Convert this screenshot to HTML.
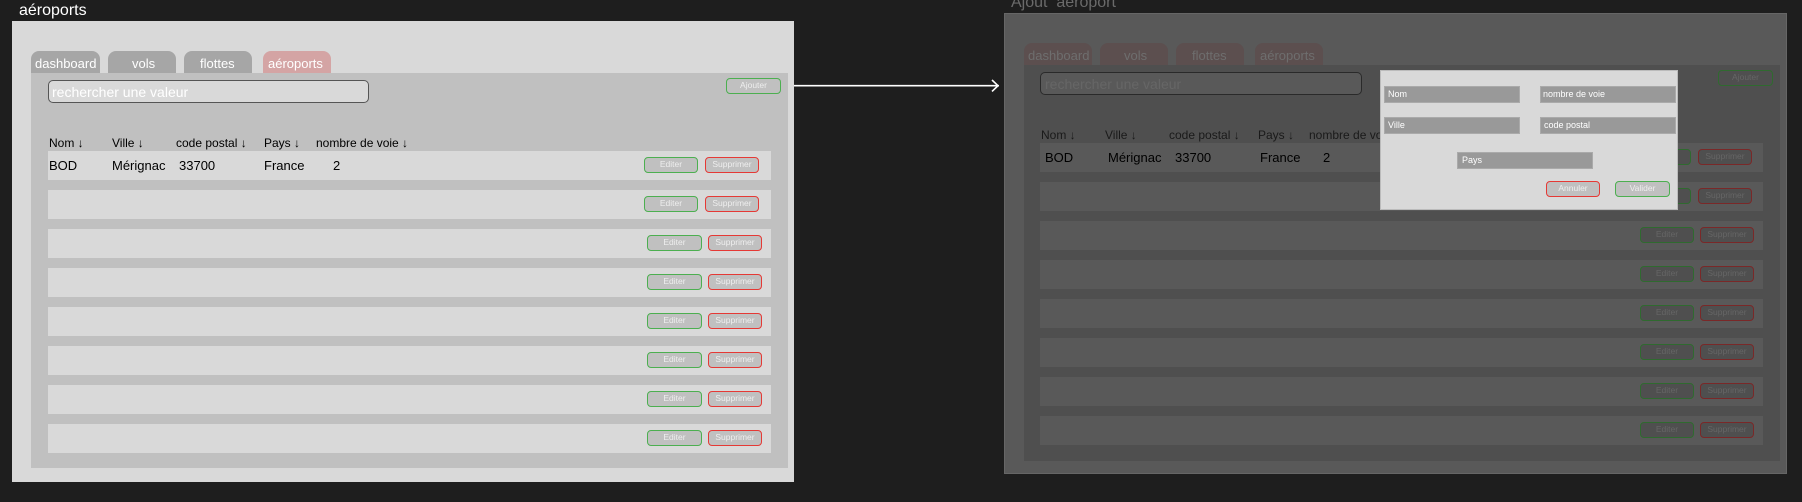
<!DOCTYPE html>
<html><head><meta charset="utf-8"><style>
*{margin:0;padding:0;box-sizing:border-box}
body{width:1802px;height:502px;background:#1e1e1e;position:relative;overflow:hidden;font-family:"Liberation Sans",sans-serif}
div,span{position:absolute}
.t{white-space:nowrap;line-height:1}
.btn{border:1.5px solid;border-radius:4px;font-size:8.5px;color:#eee;text-align:center;line-height:13px}
</style></head><body>

<!-- LEFT FRAME -->
<span class="t" style="left:19px;top:3px;font-size:16px;color:#fff">aéroports</span>
<div style="left:12px;top:21px;width:782px;height:461px;background:#d9d9d9"></div>
<div style="left:31px;top:51px;width:69px;height:23px;background:#a6a6a6;border-radius:8px 8px 0 0"></div>
<div style="left:108px;top:51px;width:68px;height:23px;background:#a6a6a6;border-radius:8px 8px 0 0"></div>
<div style="left:184px;top:51px;width:68px;height:23px;background:#a6a6a6;border-radius:8px 8px 0 0"></div>
<div style="left:263px;top:51px;width:68px;height:23px;background:#d4a4a4;border-radius:8px 8px 0 0"></div>
<span class="t" style="left:35px;top:57px;font-size:13px;color:#fff">dashboard</span>
<span class="t" style="left:132px;top:57px;font-size:13px;color:#fff">vols</span>
<span class="t" style="left:200px;top:57px;font-size:13px;color:#fff">flottes</span>
<span class="t" style="left:268px;top:57px;font-size:13px;color:#fff">aéroports</span>
<div style="left:31px;top:73px;width:757px;height:395px;background:#c0c0c0"></div>
<div style="left:48px;top:80px;width:321px;height:23px;background:#d9d9d9;border:1px solid #555;border-radius:5px"></div>
<span class="t" style="left:52px;top:85px;font-size:14px;color:#fff">rechercher une valeur</span>
<div class="btn" style="left:726px;top:78px;width:55px;height:16px;background:#c0c0c0;border-color:#4caf50">Ajouter</div>
<span class="t" style="left:49px;top:137px;font-size:12px;color:#000">Nom ↓</span>
<span class="t" style="left:112px;top:137px;font-size:12px;color:#000">Ville ↓</span>
<span class="t" style="left:176px;top:137px;font-size:12px;color:#000">code postal ↓</span>
<span class="t" style="left:264px;top:137px;font-size:12px;color:#000">Pays ↓</span>
<span class="t" style="left:316px;top:137px;font-size:12px;color:#000">nombre de voie ↓</span>

<div style="left:48px;top:150.7px;width:723px;height:29px;background:#d9d9d9"></div>
<div style="left:48px;top:189.7px;width:723px;height:29px;background:#d9d9d9"></div>
<div style="left:48px;top:228.7px;width:723px;height:29px;background:#d9d9d9"></div>
<div style="left:48px;top:267.7px;width:723px;height:29px;background:#d9d9d9"></div>
<div style="left:48px;top:306.7px;width:723px;height:29px;background:#d9d9d9"></div>
<div style="left:48px;top:345.7px;width:723px;height:29px;background:#d9d9d9"></div>
<div style="left:48px;top:384.7px;width:723px;height:29px;background:#d9d9d9"></div>
<div style="left:48px;top:423.7px;width:723px;height:29px;background:#d9d9d9"></div>
<span class="t" style="left:49px;top:159px;font-size:13px;color:#000">BOD</span>
<span class="t" style="left:112px;top:159px;font-size:13px;color:#000">Mérignac</span>
<span class="t" style="left:179px;top:159px;font-size:13px;color:#000">33700</span>
<span class="t" style="left:264px;top:159px;font-size:13px;color:#000">France</span>
<span class="t" style="left:333px;top:159px;font-size:13px;color:#000">2</span>

<div class="btn" style="left:644px;top:157px;width:54px;height:16px;background:#c0c0c0;border-color:#4caf50">Editer</div>
<div class="btn" style="left:705px;top:157px;width:54px;height:16px;background:#c0c0c0;border-color:#e53935">Supprimer</div>
<div class="btn" style="left:644px;top:196px;width:54px;height:16px;background:#c0c0c0;border-color:#4caf50">Editer</div>
<div class="btn" style="left:705px;top:196px;width:54px;height:16px;background:#c0c0c0;border-color:#e53935">Supprimer</div>
<div class="btn" style="left:647px;top:235px;width:55px;height:16px;background:#c0c0c0;border-color:#4caf50">Editer</div>
<div class="btn" style="left:708px;top:235px;width:54px;height:16px;background:#c0c0c0;border-color:#e53935">Supprimer</div>
<div class="btn" style="left:647px;top:274px;width:55px;height:16px;background:#c0c0c0;border-color:#4caf50">Editer</div>
<div class="btn" style="left:708px;top:274px;width:54px;height:16px;background:#c0c0c0;border-color:#e53935">Supprimer</div>
<div class="btn" style="left:647px;top:313px;width:55px;height:16px;background:#c0c0c0;border-color:#4caf50">Editer</div>
<div class="btn" style="left:708px;top:313px;width:54px;height:16px;background:#c0c0c0;border-color:#e53935">Supprimer</div>
<div class="btn" style="left:647px;top:352px;width:55px;height:16px;background:#c0c0c0;border-color:#4caf50">Editer</div>
<div class="btn" style="left:708px;top:352px;width:54px;height:16px;background:#c0c0c0;border-color:#e53935">Supprimer</div>
<div class="btn" style="left:647px;top:391px;width:55px;height:16px;background:#c0c0c0;border-color:#4caf50">Editer</div>
<div class="btn" style="left:708px;top:391px;width:54px;height:16px;background:#c0c0c0;border-color:#e53935">Supprimer</div>
<div class="btn" style="left:647px;top:430px;width:55px;height:16px;background:#c0c0c0;border-color:#4caf50">Editer</div>
<div class="btn" style="left:708px;top:430px;width:54px;height:16px;background:#c0c0c0;border-color:#e53935">Supprimer</div>

<!-- ARROW -->
<svg style="position:absolute;left:794px;top:78px" width="210" height="16"><path d="M0 7.7H205M198 2L204 7.7L198 13.4" stroke="#fff" stroke-width="1.6" fill="none"/></svg>

<!-- RIGHT FRAME -->
<span class="t" style="left:1011px;top:-5px;font-size:16px;color:#6a6a6a">Ajout&nbsp; aéroport</span>
<div style="left:1004px;top:13px;width:783px;height:461px;background:#595959;border:1px solid #666"></div>
<div style="left:1024px;top:43px;width:68px;height:23px;background:#5c4f4f;border-radius:8px 8px 0 0"></div>
<div style="left:1100px;top:43px;width:68px;height:23px;background:#5c4f4f;border-radius:8px 8px 0 0"></div>
<div style="left:1176px;top:43px;width:68px;height:23px;background:#5c4f4f;border-radius:8px 8px 0 0"></div>
<div style="left:1255px;top:43px;width:68px;height:23px;background:#5c4f4f;border-radius:8px 8px 0 0"></div>
<span class="t" style="left:1028px;top:49px;font-size:13px;color:#6e6e6e">dashboard</span>
<span class="t" style="left:1124px;top:49px;font-size:13px;color:#6e6e6e">vols</span>
<span class="t" style="left:1192px;top:49px;font-size:13px;color:#6e6e6e">flottes</span>
<span class="t" style="left:1260px;top:49px;font-size:13px;color:#6e6e6e">aéroports</span>
<div style="left:1024px;top:65px;width:756px;height:396px;background:#4f4f4f"></div>
<div style="left:1040px;top:72px;width:322px;height:23px;background:#595959;border:1px solid #2a2a2a;border-radius:5px"></div>
<span class="t" style="left:1045px;top:77px;font-size:14px;color:#666">rechercher une valeur</span>
<div class="btn" style="left:1718px;top:70px;width:55px;height:16px;background:#4f4f4f;border-color:#2f6a2f;color:#666">Ajouter</div>
<span class="t" style="left:1041px;top:129px;font-size:12px;color:#1a1a1a">Nom ↓</span>
<span class="t" style="left:1105px;top:129px;font-size:12px;color:#1a1a1a">Ville ↓</span>
<span class="t" style="left:1169px;top:129px;font-size:12px;color:#1a1a1a">code postal ↓</span>
<span class="t" style="left:1258px;top:129px;font-size:12px;color:#1a1a1a">Pays ↓</span>
<span class="t" style="left:1309px;top:129px;font-size:12px;color:#1a1a1a">nombre de voie ↓</span>

<div style="left:1040px;top:143px;width:723px;height:29px;background:#595959"></div>
<div style="left:1040px;top:182px;width:723px;height:29px;background:#595959"></div>
<div style="left:1040px;top:221px;width:723px;height:29px;background:#595959"></div>
<div style="left:1040px;top:260px;width:723px;height:29px;background:#595959"></div>
<div style="left:1040px;top:299px;width:723px;height:29px;background:#595959"></div>
<div style="left:1040px;top:338px;width:723px;height:29px;background:#595959"></div>
<div style="left:1040px;top:377px;width:723px;height:29px;background:#595959"></div>
<div style="left:1040px;top:416px;width:723px;height:29px;background:#595959"></div>
<span class="t" style="left:1045px;top:151px;font-size:13px;color:#000">BOD</span>
<span class="t" style="left:1108px;top:151px;font-size:13px;color:#000">Mérignac</span>
<span class="t" style="left:1175px;top:151px;font-size:13px;color:#000">33700</span>
<span class="t" style="left:1260px;top:151px;font-size:13px;color:#000">France</span>
<span class="t" style="left:1323px;top:151px;font-size:13px;color:#000">2</span>

<div class="btn" style="left:1637px;top:149px;width:54px;height:16px;background:#4f4f4f;border-color:#2f6a2f;color:#666">Editer</div>
<div class="btn" style="left:1698px;top:149px;width:54px;height:16px;background:#4f4f4f;border-color:#7a2828;color:#666">Supprimer</div>
<div class="btn" style="left:1637px;top:188px;width:54px;height:16px;background:#4f4f4f;border-color:#2f6a2f;color:#666">Editer</div>
<div class="btn" style="left:1698px;top:188px;width:54px;height:16px;background:#4f4f4f;border-color:#7a2828;color:#666">Supprimer</div>
<div class="btn" style="left:1640px;top:227px;width:54px;height:16px;background:#4f4f4f;border-color:#2f6a2f;color:#666">Editer</div>
<div class="btn" style="left:1700px;top:227px;width:54px;height:16px;background:#4f4f4f;border-color:#7a2828;color:#666">Supprimer</div>
<div class="btn" style="left:1640px;top:266px;width:54px;height:16px;background:#4f4f4f;border-color:#2f6a2f;color:#666">Editer</div>
<div class="btn" style="left:1700px;top:266px;width:54px;height:16px;background:#4f4f4f;border-color:#7a2828;color:#666">Supprimer</div>
<div class="btn" style="left:1640px;top:305px;width:54px;height:16px;background:#4f4f4f;border-color:#2f6a2f;color:#666">Editer</div>
<div class="btn" style="left:1700px;top:305px;width:54px;height:16px;background:#4f4f4f;border-color:#7a2828;color:#666">Supprimer</div>
<div class="btn" style="left:1640px;top:344px;width:54px;height:16px;background:#4f4f4f;border-color:#2f6a2f;color:#666">Editer</div>
<div class="btn" style="left:1700px;top:344px;width:54px;height:16px;background:#4f4f4f;border-color:#7a2828;color:#666">Supprimer</div>
<div class="btn" style="left:1640px;top:383px;width:54px;height:16px;background:#4f4f4f;border-color:#2f6a2f;color:#666">Editer</div>
<div class="btn" style="left:1700px;top:383px;width:54px;height:16px;background:#4f4f4f;border-color:#7a2828;color:#666">Supprimer</div>
<div class="btn" style="left:1640px;top:422px;width:54px;height:16px;background:#4f4f4f;border-color:#2f6a2f;color:#666">Editer</div>
<div class="btn" style="left:1700px;top:422px;width:54px;height:16px;background:#4f4f4f;border-color:#7a2828;color:#666">Supprimer</div>

<!-- MODAL -->
<div style="left:1380px;top:70px;width:298px;height:140px;background:#d9d9d9;border:1px solid #bbb"></div>
<div style="left:1384px;top:86px;width:136px;height:17px;background:#999;border:1px solid #aaa"></div>
<div style="left:1540px;top:86px;width:136px;height:17px;background:#999;border:1px solid #aaa"></div>
<div style="left:1384px;top:117px;width:136px;height:17px;background:#999;border:1px solid #aaa"></div>
<div style="left:1540px;top:117px;width:136px;height:17px;background:#999;border:1px solid #aaa"></div>
<div style="left:1457px;top:152px;width:136px;height:17px;background:#999;border:1px solid #aaa"></div>
<span class="t" style="left:1388px;top:90px;font-size:9px;color:#fff">Nom</span>
<span class="t" style="left:1543px;top:90px;font-size:9px;color:#fff">nombre de voie</span>
<span class="t" style="left:1388px;top:121px;font-size:9px;color:#fff">Ville</span>
<span class="t" style="left:1544px;top:121px;font-size:9px;color:#fff">code postal</span>
<span class="t" style="left:1462px;top:156px;font-size:9px;color:#fff">Pays</span>
<div class="btn" style="left:1546px;top:181px;width:54px;height:16px;background:#c0c0c0;border-color:#e53935">Annuler</div>
<div class="btn" style="left:1615px;top:181px;width:55px;height:16px;background:#c0c0c0;border-color:#4caf50">Valider</div>

</body></html>
